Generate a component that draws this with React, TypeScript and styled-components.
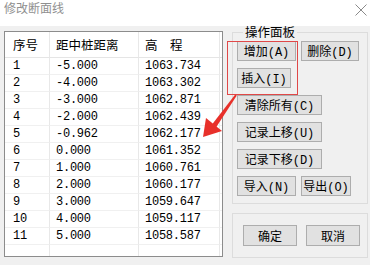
import styled, { createGlobalStyle } from 'styled-components';

const GlobalStyle = createGlobalStyle`
 html, body {
  margin: 0;
  padding: 0;
  background: #f0f0f0;
 }
 body {
  font-family: "Noto Sans CJK SC", sans-serif;
 }
`;

const Window = styled.div`
 position: relative;
 width: 370px;
 height: 265px;
 background: #f0f0f0;
 overflow: hidden;
`;

const TitleBar = styled.div`
 display: flex;
 justify-content: space-between;
 align-items: flex-start;
 height: 26px;
 padding: 1px 3px 0 4px;
 box-sizing: border-box;
 background: #fff;
`;

const Title = styled.span`
 font-size: 12px;
 line-height: 14px;
 color: #8f8f8f;
`;

const Body = styled.div`
 display: flex;
 align-items: flex-start;
 gap: 9px;
 padding-left: 4px;
`;

const Sheet = styled.div`
 margin-top: 5px;
 width: 219px;
 height: 226px;
 box-sizing: border-box;
 border: 1px solid #8c8c8c;
 background: #fff;
 display: grid;
 grid-template-columns: 45px 89px 81px 1fr;
 grid-template-rows: 26px repeat(11, 17px) 1fr;
 overflow: hidden;
`;

const Cell = styled.div<{ $head?: boolean; $last?: boolean; $pad: number; $open?: boolean }>`
 box-sizing: border-box;
 display: flex;
 align-items: center;
 padding-left: ${(p) => p.$pad}px;
 border-right: ${(p) => (p.$last ? 'none' : '1px solid #e8e8e8')};
 border-bottom: ${(p) => (p.$open ? 'none' : p.$head ? '1px solid #e5e5e5' : '1px solid #f0f0f0')};
 font-family: ${(p) => (p.$head ? '"Noto Sans CJK SC", sans-serif' : '"Liberation Mono", "Noto Sans CJK SC", monospace')};
 font-size: ${(p) => (p.$head ? '12.5px' : '12px')};
 letter-spacing: ${(p) => (p.$head ? '0' : '-0.25px')};
 color: #000;
 white-space: pre;
`;

const Side = styled.div`
 width: 136px;
 display: flex;
 flex-direction: column;
`;

const GroupBox = styled.fieldset`
 margin: 0;
 height: 178px;
 box-sizing: border-box;
 border: 1px solid #dcdcdc;
 padding: 3px 4px 0 4px;
`;

const Legend = styled.legend`
 margin-left: 6px;
 padding: 0 2px;
 font-size: 12.5px;
 line-height: 12px;
 color: #000;
`;

const Stack = styled.div`
 display: flex;
 flex-direction: column;
 align-items: flex-start;
 gap: 7px;
`;

const ButtonRow = styled.div`
 display: flex;
 gap: 5px;
`;

const Button = styled.button<{ $w: number; $h?: number }>`
 width: ${(p) => p.$w}px;
 height: ${(p) => p.$h ?? 20}px;
 box-sizing: border-box;
 margin: 0;
 padding: 0;
 border: 1px solid #adadad;
 background: #e1e1e1;
 display: flex;
 align-items: center;
 justify-content: center;
 font-family: "Liberation Mono", "Noto Sans CJK SC", monospace;
 font-size: 12px;
 color: #000;
 white-space: pre;
`;

const ConfirmBox = styled.div`
 margin-top: 9px;
 height: 45px;
 box-sizing: border-box;
 border: 1px solid #dcdcdc;
 display: flex;
 align-items: center;
 gap: 9px;
 padding-left: 10px;
`;

const Overlay = styled.svg`
 position: absolute;
 left: 0;
 top: 0;
 pointer-events: none;
`;

const rows: [string, string, string][] = [
 ['1', '-5.000', '1063.734'],
 ['2', '-4.000', '1063.302'],
 ['3', '-3.000', '1062.871'],
 ['4', '-2.000', '1062.439'],
 ['5', '-0.962', '1062.177'],
 ['6', '0.000', '1061.352'],
 ['7', '1.000', '1060.761'],
 ['8', '2.000', '1060.177'],
 ['9', '3.000', '1059.647'],
 ['10', '4.000', '1059.117'],
 ['11', '5.000', '1058.587'],
];

const pads = [8, 6, 6, 0];

export default function App() {
 return (
  <Window>
   <GlobalStyle />
   <TitleBar>
    <Title>修改断面线</Title>
    <svg width='12' height='12' viewBox='0 0 12 12' style={{ marginTop: 3 }}>
     <path d='M0.5 0.5 L11.5 11.5 M11.5 0.5 L0.5 11.5' stroke='#8a8a8a' strokeWidth='1' />
    </svg>
   </TitleBar>
   <Body>
    <Sheet>
     {['序号', '距中桩距离', '高　程', ''].map((h, i) => (
      <Cell key={'h' + i} $head $pad={pads[i]} $last={i === 3}>
       {h}
      </Cell>
     ))}
     {rows.map((r) =>
      [...r, ''].map((v, i) => (
       <Cell key={r[0] + '-' + i} $pad={pads[i]} $last={i === 3}>
        {v}
       </Cell>
      )),
     )}
     {pads.map((p, i) => (
      <Cell key={'f' + i} $pad={p} $last={i === 3} $open />
     ))}
    </Sheet>
    <Side>
     <GroupBox>
      <Legend>操作面板</Legend>
      <Stack>
       <ButtonRow>
        <Button $w={59}>增加(A)</Button>
        <Button $w={58}>删除(D)</Button>
       </ButtonRow>
       <Button $w={54}>插入(I)</Button>
       <Button $w={85}>清除所有(C)</Button>
       <Button $w={85}>记录上移(U)</Button>
       <Button $w={85}>记录下移(D)</Button>
       <ButtonRow>
        <Button $w={59}>导入(N)</Button>
        <Button $w={50}>导出(O)</Button>
       </ButtonRow>
      </Stack>
     </GroupBox>
     <ConfirmBox>
      <Button $w={54} $h={21}>确定</Button>
      <Button $w={54} $h={21}>取消</Button>
     </ConfirmBox>
    </Side>
   </Body>
   <Overlay width='370' height='265' viewBox='0 0 370 265'>
    <rect x='227.5' y='41.5' width='70' height='53' fill='none' stroke='#e04848' strokeWidth='1' />
    <polygon points='236.8,95.6 235.2,94.4 212,124.6 216,127.4' fill='#e8302a' />
    <polygon points='203,137 206,118 222,131' fill='#e8302a' />
   </Overlay>
  </Window>
 );
}
